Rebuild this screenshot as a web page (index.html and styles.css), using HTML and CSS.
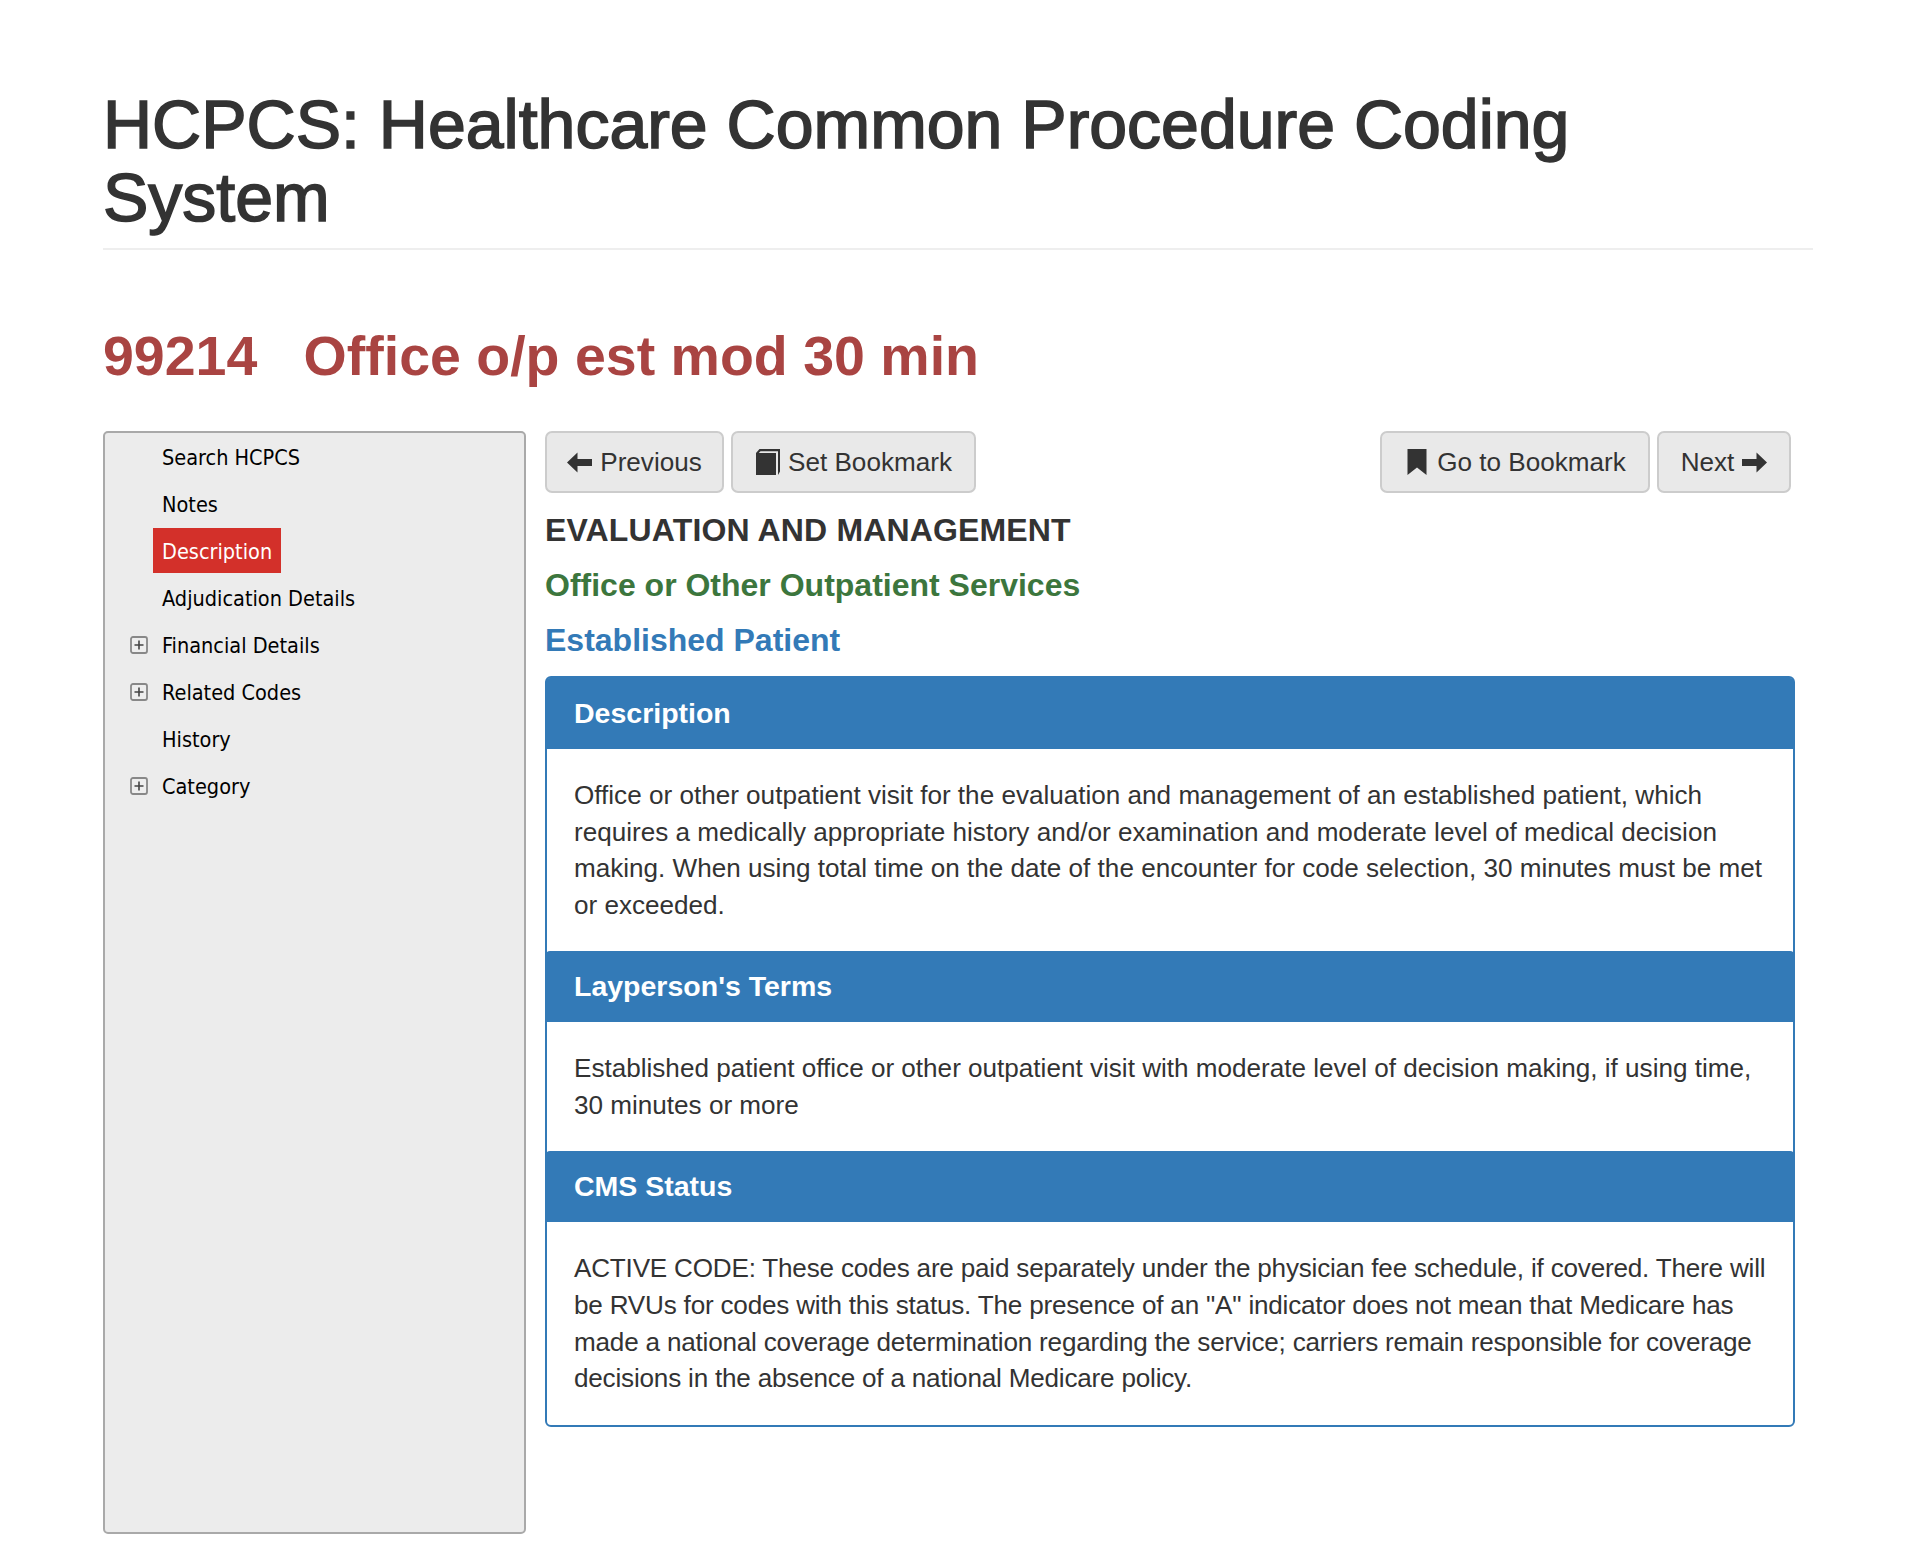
FILE: index.html
```html
<!DOCTYPE html>
<html lang="en">
<head>
    <meta charset="UTF-8">
    <title>HCPCS: Healthcare Common Procedure Coding System</title>
    <link rel="stylesheet" href="styles.css">
</head>
<body>
    <header class="page-header">
        <h1>HCPCS: Healthcare Common Procedure Coding System</h1>
    </header>
    <h2 class="code-title">99214&nbsp;&nbsp; Office o/p est mod 30 min</h2>
    <div class="layout">
        <nav class="sidebar">
            <ul class="tree">
                <li><span class="toggle"></span><a href="#">Search HCPCS</a></li>
                <li><span class="toggle"></span><a href="#">Notes</a></li>
                <li><span class="toggle"></span><a href="#" class="active">Description</a></li>
                <li><span class="toggle"></span><a href="#">Adjudication Details</a></li>
                <li>
                    <span class="toggle"><svg viewBox="0 0 18 18" width="18" height="18"><rect x="1" y="1" width="16" height="16" rx="2" fill="#eee" stroke="#888" stroke-width="1.8"/><path d="M9 4.500v9M4.500 9h9" stroke="#444" stroke-width="1.600"/></svg></span>
                    <a href="#">Financial Details</a>
                </li>
                <li>
                    <span class="toggle"><svg viewBox="0 0 18 18" width="18" height="18"><rect x="1" y="1" width="16" height="16" rx="2" fill="#eee" stroke="#888" stroke-width="1.8"/><path d="M9 4.500v9M4.500 9h9" stroke="#444" stroke-width="1.600"/></svg></span>
                    <a href="#">Related Codes</a>
                </li>
                <li><span class="toggle"></span><a href="#">History</a></li>
                <li>
                    <span class="toggle"><svg viewBox="0 0 18 18" width="18" height="18"><rect x="1" y="1" width="16" height="16" rx="2" fill="#eee" stroke="#888" stroke-width="1.8"/><path d="M9 4.500v9M4.500 9h9" stroke="#444" stroke-width="1.600"/></svg></span>
                    <a href="#">Category</a>
                </li>
            </ul>
        </nav>
        <main class="content">
            <div class="toolbar">
                <div class="btn-group">
                    <a href="#" class="btn btn-prev">
                        <svg class="icon" viewBox="0 0 26 26" width="26" height="26"><path d="M0 13.500 10.500 3.500v6.500H25v7H10.500v6.500z"/></svg>
                        Previous
                    </a>
                    <a href="#" class="btn btn-set">
                        <svg class="icon" viewBox="0 0 26 26" width="26" height="26"><path d="M1 4 4.500 0H25v22.500L23 26V2.200H5.500L3.800 4H21v22H1z"/></svg>
                        Set Bookmark
                    </a>
                </div>
                <div class="btn-group">
                    <a href="#" class="btn btn-go">
                        <svg class="icon" viewBox="0 0 26 26" width="26" height="26"><path d="M3.500 0h19v26l-9.500-7.500-9.500 7.500z"/></svg>
                        Go to Bookmark
                    </a>
                    <a href="#" class="btn btn-next">
                        Next
                        <svg class="icon" viewBox="0 0 26 26" width="26" height="26"><path d="M26 13.500 15.500 3.500v6.500H1v7h14.500v6.500z"/></svg>
                    </a>
                </div>
            </div>
            <h4 class="section-title section-caps">EVALUATION AND MANAGEMENT</h4>
            <h4 class="section-title text-success">Office or Other Outpatient Services</h4>
            <h4 class="section-title text-primary">Established Patient</h4>
            <div class="panel">
                <div class="panel-heading">Description</div>
                <div class="panel-body">Office or other outpatient visit for the evaluation and management of an established patient, which requires a medically appropriate history and/or examination and moderate level of medical decision making. When using total time on the date of the encounter for code selection, 30 minutes must be met or exceeded.</div>
                <div class="panel-heading">Layperson's Terms</div>
                <div class="panel-body">Established patient office or other outpatient visit with moderate level of decision making, if using time, 30 minutes or more</div>
                <div class="panel-heading">CMS Status</div>
                <div class="panel-body panel-body-tight">ACTIVE CODE: These codes are paid separately under the physician fee schedule, if covered. There will be RVUs for codes with this status. The presence of an "A" indicator does not mean that Medicare has made a national coverage determination regarding the service; carriers remain responsible for coverage decisions in the absence of a national Medicare policy.</div>
            </div>
        </main>
    </div>
</body>
</html>
```

FILE: styles.css
```css
* {
    box-sizing: border-box;
}
body {
    font-family: 'Liberation Sans', Arial, sans-serif;
    font-size: 26.1px;
    line-height: 36.7px;
    color: #333;
    background: #fff;
    margin: 0;
    padding: 88px 107px 31px 103px;
}
a {
    color: inherit;
    text-decoration: none;
}
.page-header {
    border-bottom: 2px solid #eee;
    padding-bottom: 14px;
}
h1 {
    font-size: 68px;
    line-height: 73px;
    font-weight: normal;
    -webkit-text-stroke: 1.6px #333;
    max-width: 1600px;
    margin: 0;
}
.code-title {
    font-size: 55.5px;
    line-height: 60px;
    font-weight: bold;
    color: #a94442;
    margin: 76px 0 45px;
}
.layout {
    display: grid;
    grid-template-columns: 423px 1250px;
    gap: 19px;
}
.sidebar {
    height: 1103px;
    background: #ececec;
    border: 2px solid #a9a9a9;
    border-radius: 5px;
    padding: 0 0 0 25px;
}
.tree {
    list-style: none;
    margin: 0;
    padding: 0;
    font-family: 'DejaVu Sans', sans-serif;
    font-stretch: condensed;
    font-size: 21.5px;
    color: #000;
}
.tree li {
    display: flex;
    align-items: center;
    height: 47px;
}
.toggle {
    width: 23px;
    display: flex;
    flex: none;
}
.tree a {
    height: 45px;
    line-height: 47px;
    padding: 0 9px;
}
.tree a.active {
    background: #d3302a;
    color: #fff;
}
.toolbar {
    display: flex;
    justify-content: space-between;
    padding-right: 4px;
    margin-bottom: 17px;
}
.btn-group {
    display: flex;
    gap: 7px;
}
.btn {
    display: inline-flex;
    align-items: center;
    justify-content: center;
    gap: 7px;
    height: 62px;
    background: #e9e9e9;
    border: 2px solid #ccc;
    border-radius: 7px;
}
.btn-prev {
    width: 179px;
}
.btn-set {
    width: 245px;
}
.btn-go {
    width: 270px;
}
.btn-next {
    width: 134px;
}
.icon {
    fill: #333;
    flex: none;
}
.section-title {
    font-size: 32px;
    line-height: 40px;
    font-weight: bold;
    margin: 0 0 15px;
}
.section-caps {
    letter-spacing: 0.15px;
}
.text-success {
    color: #3c763d;
}
.text-primary {
    color: #337ab7;
}
.panel {
    border: 2px solid #337ab7;
    border-radius: 6px;
    margin-top: 16px;
}
.panel-heading {
    background: #337ab7;
    color: #fff;
    font-size: 28.5px;
    font-weight: bold;
    line-height: 38px;
    padding: 16px 28px 17px;
    border-radius: 4px 4px 0 0;
    margin: 0 -1px;
}
.panel-body {
    padding: 28px 24px 27.5px 27px;
}
.panel-body-tight {
    letter-spacing: -0.2px;
}
```
